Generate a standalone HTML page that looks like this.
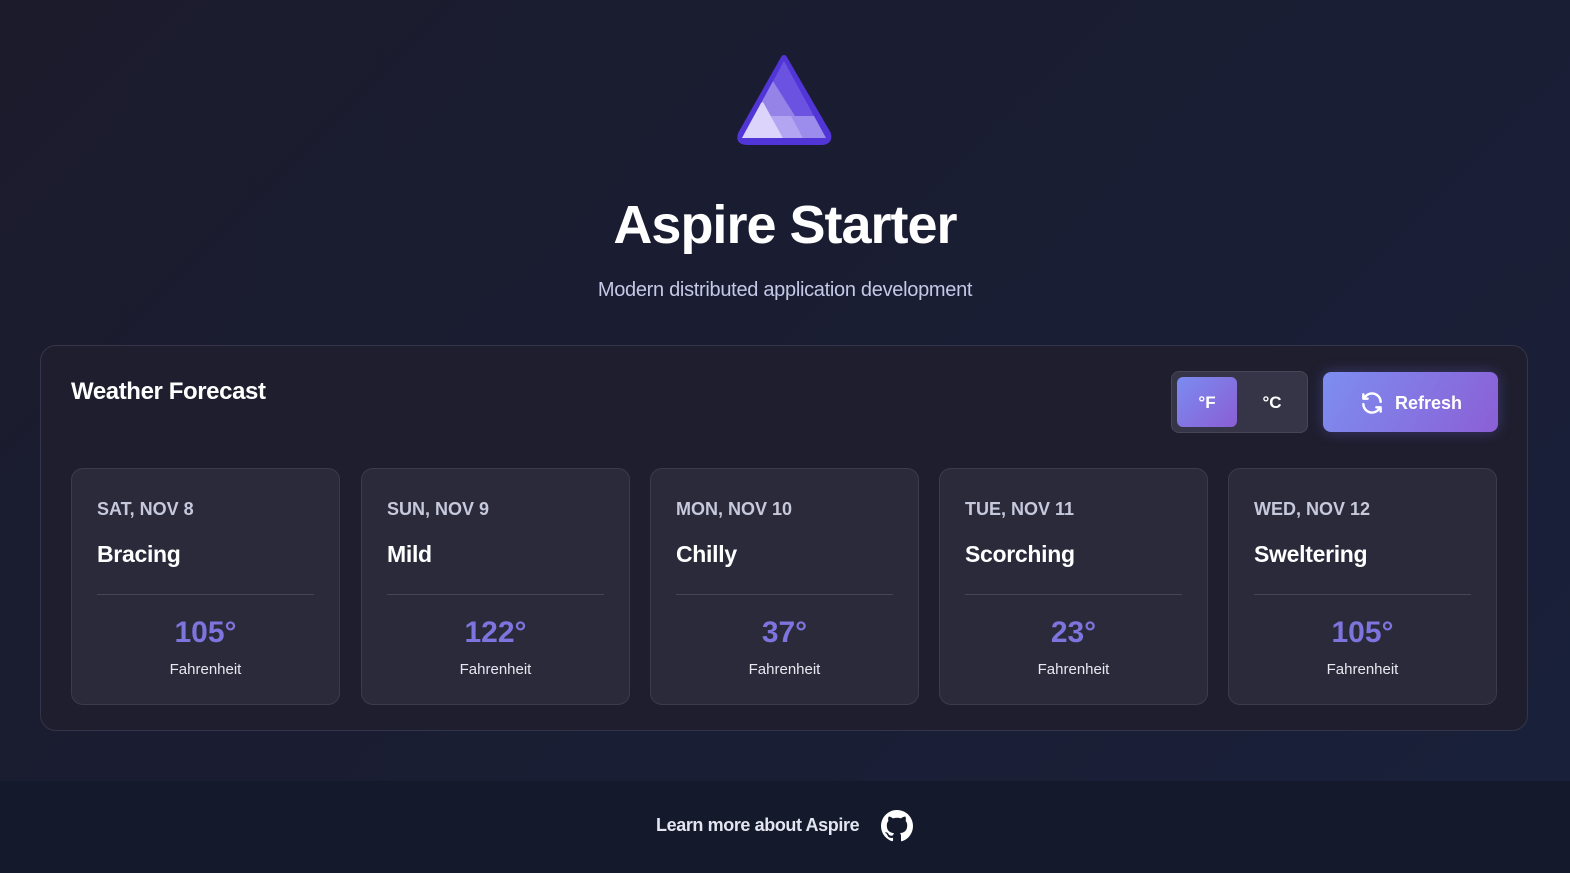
<!DOCTYPE html>
<html><head><meta charset="utf-8"><style>
*{box-sizing:border-box;margin:0;padding:0}
body{width:1570px;height:873px;overflow:hidden;font-family:"Liberation Sans",sans-serif;background:linear-gradient(135deg,#1b1b2c 0%,#19203a 100%);color:#fff;position:relative}
.logo{position:absolute;left:733px;top:52px}
h1{position:absolute;top:194px;width:100%;text-align:center;font-size:54px;font-weight:bold;letter-spacing:-1px}
.sub{position:absolute;top:279px;width:100%;text-align:center;font-size:20px;color:#c5c8e6;letter-spacing:-0.3px}
.panel{position:absolute;left:40px;top:345px;width:1488px;height:386px;border:1px solid #34354a;border-radius:16px;background:#1e1e2e}
.title{position:absolute;left:30px;top:32px;font-size:24px;font-weight:bold;letter-spacing:-0.4px}
.toggle{position:absolute;left:1130px;top:25px;width:137px;height:62px;border:1px solid #45465a;border-radius:8px;background:#353547}
.tf{position:absolute;left:5px;top:5px;width:60px;height:50px;border-radius:6px;background:linear-gradient(135deg,#7b8cf0,#8a5ed4);font-size:17px;font-weight:bold;text-align:center;line-height:52px}
.tc{position:absolute;left:80px;top:5px;width:40px;height:50px;font-size:17px;font-weight:bold;text-align:center;line-height:52px}
.btn{position:absolute;left:1282px;top:26px;width:175px;height:60px;border-radius:8px;background:linear-gradient(120deg,#7d8ef0,#8b5fd5);box-shadow:0 0 14px rgba(120,110,230,.35);font-size:18px;font-weight:bold;display:flex;align-items:center;justify-content:center;gap:10px;padding-top:2px}
.card{position:absolute;top:122px;width:269px;height:237px;background:#2b2a3b;border:1px solid #3b3b4e;border-radius:12px}
.d{position:absolute;left:25px;top:30px;font-size:18px;font-weight:bold;color:#c6c9dc}
.s{position:absolute;left:25px;top:72px;font-size:23px;font-weight:bold;letter-spacing:-0.3px}
.hr{position:absolute;left:25px;right:25px;top:125px;height:1px;background:#44445a}
.t{position:absolute;left:0;right:0;top:147px;text-align:center;font-size:30px;font-weight:bold;color:#7d74dd}
.u{position:absolute;left:0;right:0;top:192px;text-align:center;font-size:15px;color:#e8e8f0}
.footer{position:absolute;left:0;top:781px;width:100%;height:92px;background:#141a2c}
.fl{position:absolute;left:656px;top:34px;font-size:18px;font-weight:bold;color:#e3e5f0;letter-spacing:-0.4px}
.gh{position:absolute;left:881px;top:29px}
</style></head><body>
<svg class="logo" width="102" height="94" viewBox="0 0 102 94">
<defs><clipPath id="c"><path d="M51 9 L93 86 L9 86 Z"/></clipPath></defs>
<path d="M51 6 L95 82 Q97 90 88 90 L14 90 Q5 90 8 82 Z" fill="#5235d6" stroke="#5235d6" stroke-width="6" stroke-linejoin="round"/>
<g clip-path="url(#c)">
<rect x="0" y="0" width="102" height="94" fill="#6b52e0"/>
<path d="M38 26 L62 64 L0 64 L0 50 Z" fill="#9583e8"/>
<rect x="0" y="64" width="102" height="30" fill="#9c8cec"/>
<path d="M58 64 L72 90 L50 90 L38 64 Z" fill="#b3a5f1"/>
<path d="M30 50 L52 90 L0 90 L0 64 Z" fill="#ddd4fb"/>
</g>
</svg>
<h1>Aspire Starter</h1>
<div class="sub">Modern distributed application development</div>
<div class="panel">
<div class="title">Weather Forecast</div>
<div class="toggle"><div class="tf">°F</div><div class="tc">°C</div></div>
<div class="btn"><svg width="26" height="26" viewBox="0 0 24 24" fill="none" stroke="#fff" stroke-width="2.2" stroke-linecap="round" stroke-linejoin="round"><path d="M20 11A8 8 0 0 0 5.5 6.5L4 8M4 4v4h4M4 13a8 8 0 0 0 14.5 4.5L20 16M20 20v-4h-4"/></svg>Refresh</div>
<div class="card" style="left:30px"><div class="d">SAT, NOV 8</div><div class="s">Bracing</div><div class="hr"></div><div class="t">105°</div><div class="u">Fahrenheit</div></div>
<div class="card" style="left:320px"><div class="d">SUN, NOV 9</div><div class="s">Mild</div><div class="hr"></div><div class="t">122°</div><div class="u">Fahrenheit</div></div>
<div class="card" style="left:609px"><div class="d">MON, NOV 10</div><div class="s">Chilly</div><div class="hr"></div><div class="t">37°</div><div class="u">Fahrenheit</div></div>
<div class="card" style="left:898px"><div class="d">TUE, NOV 11</div><div class="s">Scorching</div><div class="hr"></div><div class="t">23°</div><div class="u">Fahrenheit</div></div>
<div class="card" style="left:1187px"><div class="d">WED, NOV 12</div><div class="s">Sweltering</div><div class="hr"></div><div class="t">105°</div><div class="u">Fahrenheit</div></div>
</div>
<div class="footer">
<div class="fl">Learn more about Aspire</div>
<svg class="gh" width="32" height="32" viewBox="0 0 16 16"><path fill="#fff" d="M8 0C3.58 0 0 3.58 0 8c0 3.54 2.29 6.53 5.47 7.59.4.07.55-.17.55-.38v-1.33c-2.23.48-2.7-1.07-2.7-1.07-.36-.93-.89-1.17-.89-1.17-.73-.5.06-.49.06-.49.8.06 1.23.82 1.23.82.71 1.23 1.87.87 2.33.66.07-.52.28-.87.51-1.07-1.78-.2-3.65-.89-3.65-3.95 0-.87.31-1.59.82-2.15-.08-.2-.36-1.02.08-2.12 0 0 .67-.21 2.2.82a7.6 7.6 0 0 1 4 0c1.53-1.04 2.2-.82 2.2-.82.44 1.1.16 1.92.08 2.12.51.56.82 1.27.82 2.15 0 3.07-1.87 3.75-3.65 3.95.29.25.54.73.54 1.48v2.2c0 .21.15.46.55.38A8.01 8.01 0 0 0 16 8c0-4.42-3.58-8-8-8z"/></svg>
</div>
</body></html>
